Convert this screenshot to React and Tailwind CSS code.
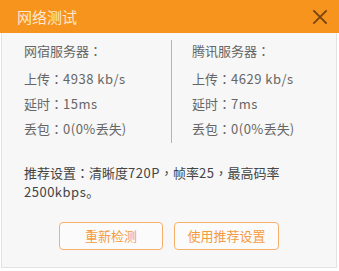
import React from 'react';

const servers = [
  { name: '网宿服务器', upload: '4938 kb/s', delay: '15ms', lossCount: '0(0%', lossLabel: '丢失)' },
  { name: '腾讯服务器', upload: '4629 kb/s', delay: '7ms', lossCount: '0(0%', lossLabel: '丢失)' },
];

// full-width punctuation centered in its box, like the original UI font
const P = ({ children }) => (
  <span style={{ fontFamily: '"Noto Sans CJK TC", sans-serif' }}>{children}</span>
);

// latin/digit runs are a touch wider in the original
const L = ({ children }) => <span className="tracking-[0.5px]">{children}</span>;

const ServerColumn = ({ server }) => (
  <div className="flex flex-col text-[13px] text-[#666666] leading-[25px]">
    <div className="mb-[3px]">{server.name}<P>：</P></div>
    <div>上传<P>：</P><L>{server.upload}</L></div>
    <div>延时<P>：</P><L>{server.delay}</L></div>
    <div>丢包<P>：</P><L>{server.lossCount}</L>{server.lossLabel}</div>
  </div>
);

export default function App() {
  return (
    <div
      className="w-[339px] h-[271px] bg-white"
      style={{ fontFamily: '"Noto Sans CJK SC", "Noto Sans", sans-serif' }}
    >
      {/* Header */}
      <div className="h-[33px] bg-[#f7941d] flex items-center justify-between pl-[17px] pr-[11px]">
        <span className="text-[15px] text-[#fde8d0] leading-none">网络测试</span>
        <svg width="16" height="16" viewBox="0 0 16 16" className="text-[#7a4713]">
          <path d="M2 2 L14 14 M14 2 L2 14" stroke="currentColor" strokeWidth="1.8" strokeLinecap="square" fill="none" />
        </svg>
      </div>

      {/* Body */}
      <div className="ml-[1px] w-[336px] h-[235px] bg-[#f7f7f7] border border-t-0 border-[#e2e2e2] flex flex-col">
        <div className="flex pt-[5px] pl-[22px]">
          <div className="w-[147px]">
            <ServerColumn server={servers[0]} />
          </div>
          <div className="w-px bg-[#b5b5b5] mt-[2px] mb-[-2px]" />
          <div className="pl-[20px]">
            <ServerColumn server={servers[1]} />
          </div>
        </div>

        <p className="mt-[22px] pl-[22px] text-[13px] text-[#444444] leading-[19px]">
          推荐设置<P>：</P>清晰度<L>720P</L><P>，</P>帧率<L>25</L><P>，</P>最高码率
          <br />
          <L>2500kbps</L>。
        </p>

        <div className="mt-[21px] flex justify-center gap-[11px]">
          <button className="w-[104px] h-[28px] rounded-[4px] border border-[#f6b06a] bg-[#fbfbfb] text-[13px] text-[#f59b3f]">
            重新检测
          </button>
          <button className="w-[105px] h-[28px] rounded-[4px] border border-[#f6b06a] bg-[#fbfbfb] text-[13px] text-[#f59b3f]">
            使用推荐设置
          </button>
        </div>
      </div>
    </div>
  );
}
